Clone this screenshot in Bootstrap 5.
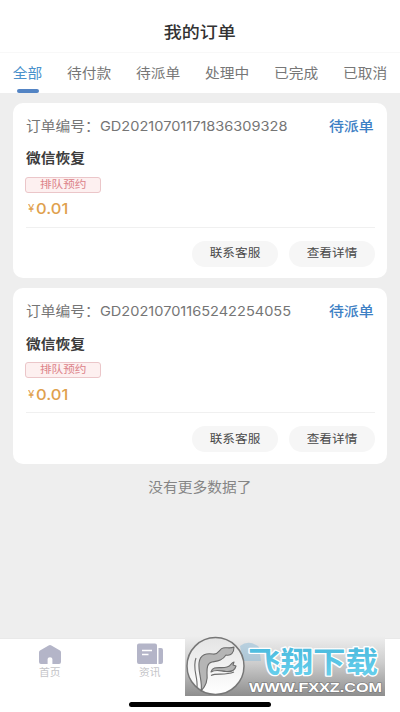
<!DOCTYPE html>
<html lang="zh-CN">
<head>
<meta charset="utf-8">
<meta name="viewport" content="width=device-width, initial-scale=1">
<title>我的订单</title>
<link href="https://cdn.jsdelivr.net/npm/bootstrap@5.3.0/dist/css/bootstrap.min.css" rel="stylesheet">
<style>
body{font-family:Inter,"Noto Sans CJK SC",sans-serif;background:#eee;color:#444;height:712px;overflow:hidden}
.screen{width:400px;height:712px}
/* slightly expanded lettering */
.tx{display:inline-block;white-space:nowrap;line-height:1;transform:scaleX(1.1)}
.tx-l{transform-origin:left center}
.tx-r{transform-origin:right center}
.topbar{height:53px;padding-top:13px;border-bottom:1px solid #f8f8f8}
.topbar .tx{font-size:16.4px;font-weight:500;color:#333}
.tabs{height:40px}
.tab{height:40px;color:#777;font-size:13.4px;padding-top:1px}
.tab-first{width:54px;flex:none}
.tab.on{color:#4a91cb}
.tab.on::after{content:"";position:absolute;left:17px;bottom:0;width:22px;height:4px;border-radius:2px;background:#5384c4}
.orders{padding:9.5px 13px 0;gap:10px}
.order{height:175.5px;border-radius:10px;padding:0 12px 0 13px}
.order-no{height:47px;padding-top:1px;font-size:13.4px;color:#757575}
.order-no .num{transform:scaleX(1.095);font-size:13.3px;margin-left:7px}
.state{color:#3d80c4;font-weight:500;font-size:13.6px;margin-right:1px}
.name{height:18px;font-size:13.4px;font-weight:700;color:#3c3c3c;padding-top:1px}
.tag{width:76px;height:16px;margin:9px 0 0 -1px;padding-top:1px;border:1px solid #ebc6c9;border-radius:3px;background:#fdf0f0;color:#dc8389;font-size:10.6px}
.price{height:20px;margin-top:6px;color:#dfa14e;padding-left:2px}
.price .yen{font-size:10.5px;margin-right:2px;padding-top:2px}
.price .amt{font-size:15px;font-weight:500}
.rule{height:1px;background:#f0f0f0;margin-top:8px}
.acts{margin-top:13px;gap:11px}
.pill{width:86px;height:26px;border-radius:13px;background:#f6f6f6;color:#484848;font-size:11.5px;padding:1px 0 0;border:0}
.more{font-size:13.4px;color:#858585;padding-top:13px}
.tabbar{height:74px;border-top:1px solid #e9e9e9;padding-top:4px}
.tabitem{width:100px;color:#c4c4c8;font-size:9.8px}
.tabitem svg{display:block;margin-bottom:3px}
.homebar{position:absolute;left:129px;top:702px;width:142px;height:5px;border-radius:3px;background:#000}
.mark-layer{position:absolute;left:185px;top:636px;width:200px;height:60px}
</style>
</head>
<body>
<div class="screen position-relative d-flex flex-column">
  <header class="topbar bg-white d-flex align-items-center justify-content-center flex-shrink-0"><span class="tx">我的订单</span></header>
  <nav class="tabs bg-white d-flex flex-shrink-0">
    <div class="tab tab-first on position-relative d-flex align-items-center justify-content-center"><span class="tx">全部</span></div>
    <div class="d-flex flex-fill">
      <div class="tab col d-flex align-items-center justify-content-center"><span class="tx">待付款</span></div>
      <div class="tab col d-flex align-items-center justify-content-center"><span class="tx">待派单</span></div>
      <div class="tab col d-flex align-items-center justify-content-center"><span class="tx">处理中</span></div>
      <div class="tab col d-flex align-items-center justify-content-center"><span class="tx">已完成</span></div>
      <div class="tab col d-flex align-items-center justify-content-center"><span class="tx">已取消</span></div>
    </div>
  </nav>
  <main class="orders d-flex flex-column flex-shrink-0">
    <section class="order bg-white">
      <div class="order-no d-flex align-items-center"><span class="tx tx-l">订单编号：</span><span class="tx tx-l num">GD20210701171836309328</span><span class="tx tx-r state ms-auto">待派单</span></div>
      <div class="name d-flex align-items-center"><span class="tx tx-l">微信恢复</span></div>
      <div class="tag d-flex align-items-center justify-content-center"><span class="tx">排队预约</span></div>
      <div class="price d-flex align-items-center"><span class="tx tx-l yen">¥</span><span class="tx tx-l amt">0.01</span></div>
      <div class="rule"></div>
      <div class="acts d-flex justify-content-end"><button class="pill btn"><span class="tx">联系客服</span></button><button class="pill btn"><span class="tx">查看详情</span></button></div>
    </section>
    <section class="order bg-white">
      <div class="order-no d-flex align-items-center"><span class="tx tx-l">订单编号：</span><span class="tx tx-l num">GD20210701165242254055</span><span class="tx tx-r state ms-auto">待派单</span></div>
      <div class="name d-flex align-items-center"><span class="tx tx-l">微信恢复</span></div>
      <div class="tag d-flex align-items-center justify-content-center"><span class="tx">排队预约</span></div>
      <div class="price d-flex align-items-center"><span class="tx tx-l yen">¥</span><span class="tx tx-l amt">0.01</span></div>
      <div class="rule"></div>
      <div class="acts d-flex justify-content-end"><button class="pill btn"><span class="tx">联系客服</span></button><button class="pill btn"><span class="tx">查看详情</span></button></div>
    </section>
  </main>
  <div class="more text-center"><span class="tx">没有更多数据了</span></div>
  <footer class="tabbar bg-white d-flex mt-auto flex-shrink-0">
    <div class="tabitem d-flex flex-column align-items-center">
      <svg width="26" height="22" viewBox="0 0 26 22"><path fill="#b4b5c8" d="M11.6 2.5Q13 1.600 14.400 2.500L23 7.600Q24 8.300 24 9.500V19Q24 21 22 21H15.400V16Q15.400 14.200 13 14.200T10.600 16V21H4Q2 21 2 19V9.500Q2 8.300 3 7.600Z"/></svg>
      <span class="tx">首页</span>
    </div>
    <div class="tabitem d-flex flex-column align-items-center">
      <svg width="28" height="22" viewBox="0 0 28 22"><path fill="#b4b5c8" d="M3 .5H19Q21 .5 21 2.500V21H3Q1 21 1 19V2.500Q1 .5 3 .5ZM22.500 5H25Q27 5 27 7V19Q27 21 25 21H22.500Z"/><path d="M6 7.500H16M6 11.500H12.500" stroke="#fff" stroke-width="1.700"/></svg>
      <span class="tx">资讯</span>
    </div>
  </footer>
  <div class="homebar"></div>
  <svg class="mark-layer" viewBox="0 0 200 60">
    <defs>
      <linearGradient id="plate" x1="0" y1="0" x2="0" y2="1"><stop offset="0" stop-color="#eee"/><stop offset=".45" stop-color="#cdcdcd"/><stop offset="1" stop-color="#8e8e8e"/></linearGradient>
      <linearGradient id="sky" x1="0" y1="0" x2="0" y2="1"><stop offset="0" stop-color="#43b4da"/><stop offset="1" stop-color="#6bd3ee"/></linearGradient>
      <linearGradient id="disc" x1="0" y1="0" x2="0" y2="1"><stop offset="0" stop-color="#e4e4e4"/><stop offset="1" stop-color="#fff"/></linearGradient>
    </defs>
    <rect width="200" height="60" fill="url(#plate)"/>
    <path d="M55 10Q64 3 74 11L76 25H58Z" fill="#8bbcda" opacity=".5"/>
    <circle cx="30.500" cy="30" r="28.500" fill="url(#disc)" stroke="#777" stroke-width="1.500"/>
    <g fill="#b5b5b5" stroke="#6c6c6c" stroke-width="1.100" stroke-linejoin="round">
      <path d="M16 55C18 47 13 36 14 27C15 18 22 17 28 18C34 19 34 13 38 12C41 11 45 13 49 11C49 17 46 20 41 19C37 25 32 25 27 26C22 27 22 32 22 37C23 45 21 50 16 55Z"/>
      <path d="M26 36C28 29 36 33 42 31C47 30 45 27 49 26L48 29L51 30C50 34 46 36 41 35.500C35 35 31 33 26 36Z"/>
      <path d="M26 39.500C32 36.500 39 40 49 36" fill="none"/>
      <path d="M11 22C7 32 13 41 12 51" fill="none"/>
    </g>
    <text transform="translate(63 36.500) scale(1 1.080)" textLength="130" lengthAdjust="spacingAndGlyphs" font-family="Noto Sans CJK SC,sans-serif" font-weight="700" font-size="27" fill="url(#sky)" stroke="#fff" stroke-width="2.500" paint-order="stroke" stroke-linejoin="round">飞翔下载</text>
    <text x="64" y="55.500" textLength="133" lengthAdjust="spacingAndGlyphs" font-family="Liberation Sans,sans-serif" font-weight="700" font-size="12" fill="#fff" stroke="#777" stroke-width="1" paint-order="stroke">WWW.FXXZ.COM</text>
  </svg>
</div>
<script src="https://cdn.jsdelivr.net/npm/bootstrap@5.3.0/dist/js/bootstrap.bundle.min.js"></script>
</body>
</html>
